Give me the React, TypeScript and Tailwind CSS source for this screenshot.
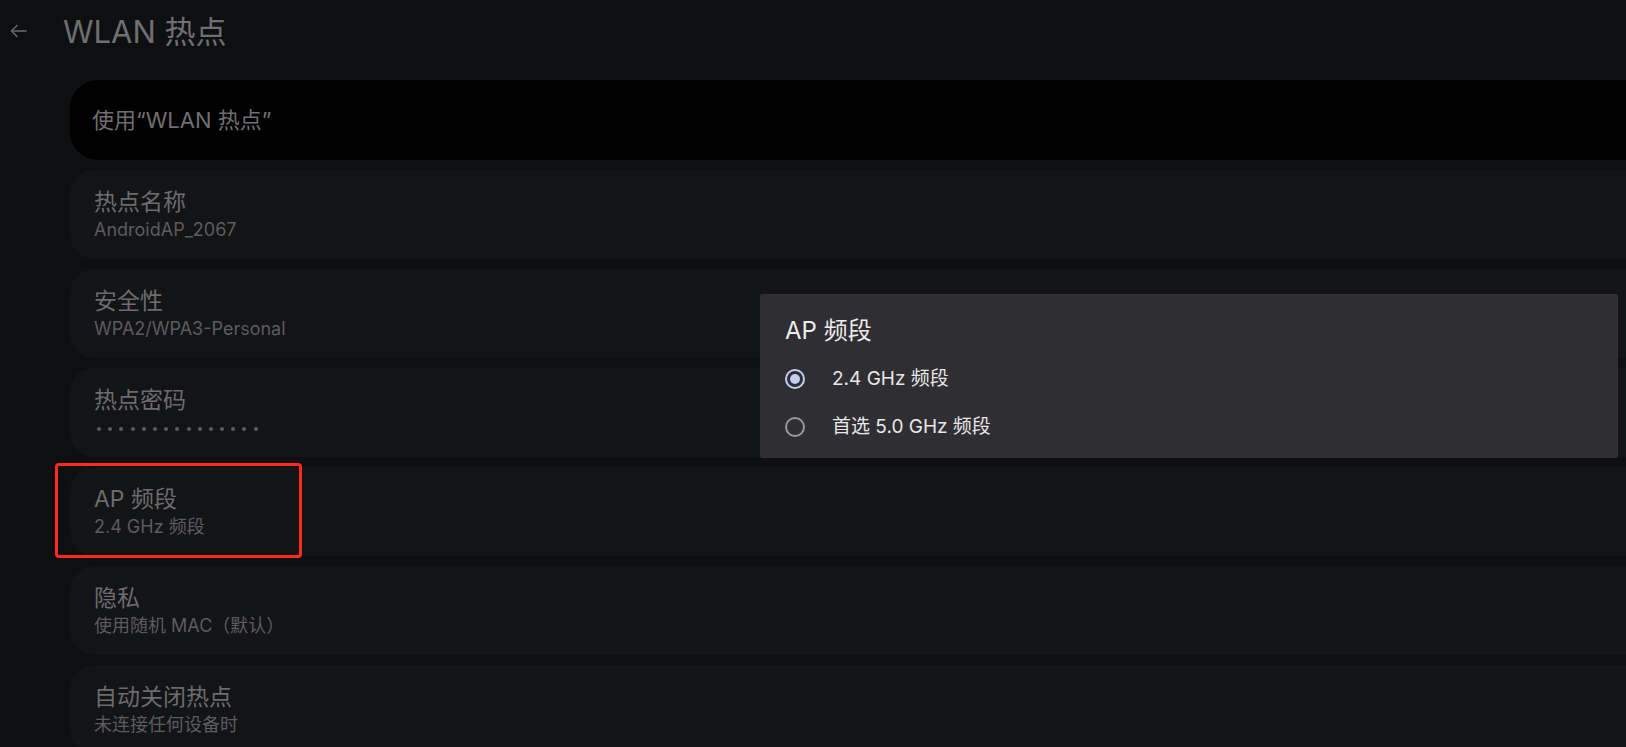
import React from 'react';

const FONT = { fontFamily: 'Inter, "Noto Sans CJK SC", "Noto Sans", sans-serif' };

type Item = { title: string; sub?: string; dots?: number };

const items: Item[] = [
  { title: '热点名称', sub: 'AndroidAP_2067' },
  { title: '安全性', sub: 'WPA2/WPA3-Personal' },
  { title: '热点密码', dots: 15 },
  { title: 'AP 频段', sub: '2.4 GHz 频段' },
  { title: '隐私', sub: '使用随机 MAC（默认）' },
  { title: '自动关闭热点', sub: '未连接任何设备时' },
];

function Radio({ checked }: { checked: boolean }) {
  return checked ? (
    <span className="flex h-[20px] w-[20px] items-center justify-center rounded-full border-[2px] border-[#c6cdf5]">
      <span className="h-[10px] w-[10px] rounded-full bg-[#c6cdf5]" />
    </span>
  ) : (
    <span className="h-[20px] w-[20px] rounded-full border-[2px] border-[#9a9a9e]" />
  );
}

export default function App() {
  return (
    <div className="relative h-[747px] w-full overflow-hidden bg-[#0e0f11]" style={FONT}>
      {/* header */}
      <header className="flex h-[62px] items-center pl-[10px]">
        <svg width="17" height="14" viewBox="0 0 17 14" fill="none" stroke="#6a6a6c" strokeWidth="1.5" strokeLinecap="round" strokeLinejoin="round">
          <path d="M16 7H1.5" />
          <path d="M7 1.5L1.5 7L7 12.5" />
        </svg>
        <h1 className="ml-[36px] text-[31px] leading-none text-[#6f6f71]">WLAN 热点</h1>
      </header>

      {/* settings list */}
      <div className="mt-[18px] ml-[70px] -mr-[40px] flex flex-col gap-[10px]">
        <div className="flex h-[80px] items-center rounded-[28px] bg-black pl-[22px]">
          <span className="text-[22px] text-[#6f6f71]">使用“WLAN 热点”</span>
        </div>

        {items.map((it) => (
          <div key={it.title} className="h-[89px] rounded-[24px] bg-[#131416] pl-[24px] pt-[18px]">
            <div className="text-[23px] leading-[28px] text-[#6c6c6e]">{it.title}</div>
            {it.sub && <div className="mt-[2px] text-[18px] leading-[24px] text-[#5c5c5e]">{it.sub}</div>}
            {it.dots && (
              <div className="flex h-[24px] items-center gap-[7.2px] pl-[3px] pt-[5px]">
                {Array.from({ length: it.dots }).map((_, i) => (
                  <span key={i} className="h-[4px] w-[4px] rounded-full bg-[#5c5c5e]" />
                ))}
              </div>
            )}
          </div>
        ))}
      </div>

      {/* highlight annotation */}
      <div className="absolute left-[55px] top-[463px] h-[95px] w-[247px] rounded-[4px] border-[3px] border-[#ff2a1c]" />

      {/* dialog */}
      <div className="absolute left-[760px] top-[294px] h-[164px] w-[858px] rounded-[2px] bg-[#2f2e33] pl-[25px] pt-[18px]">
        <div className="text-[24px] leading-[38px] text-[#ececec]">AP 频段</div>
        <div className="mt-[5px] flex flex-col">
          <div className="flex h-[48px] items-center">
            <Radio checked />
            <span className="ml-[27px] text-[19px] text-[#e8e8e8]">2.4 GHz 频段</span>
          </div>
          <div className="flex h-[48px] items-center">
            <Radio checked={false} />
            <span className="ml-[27px] text-[19px] text-[#e8e8e8]">首选 5.0 GHz 频段</span>
          </div>
        </div>
      </div>
    </div>
  );
}
